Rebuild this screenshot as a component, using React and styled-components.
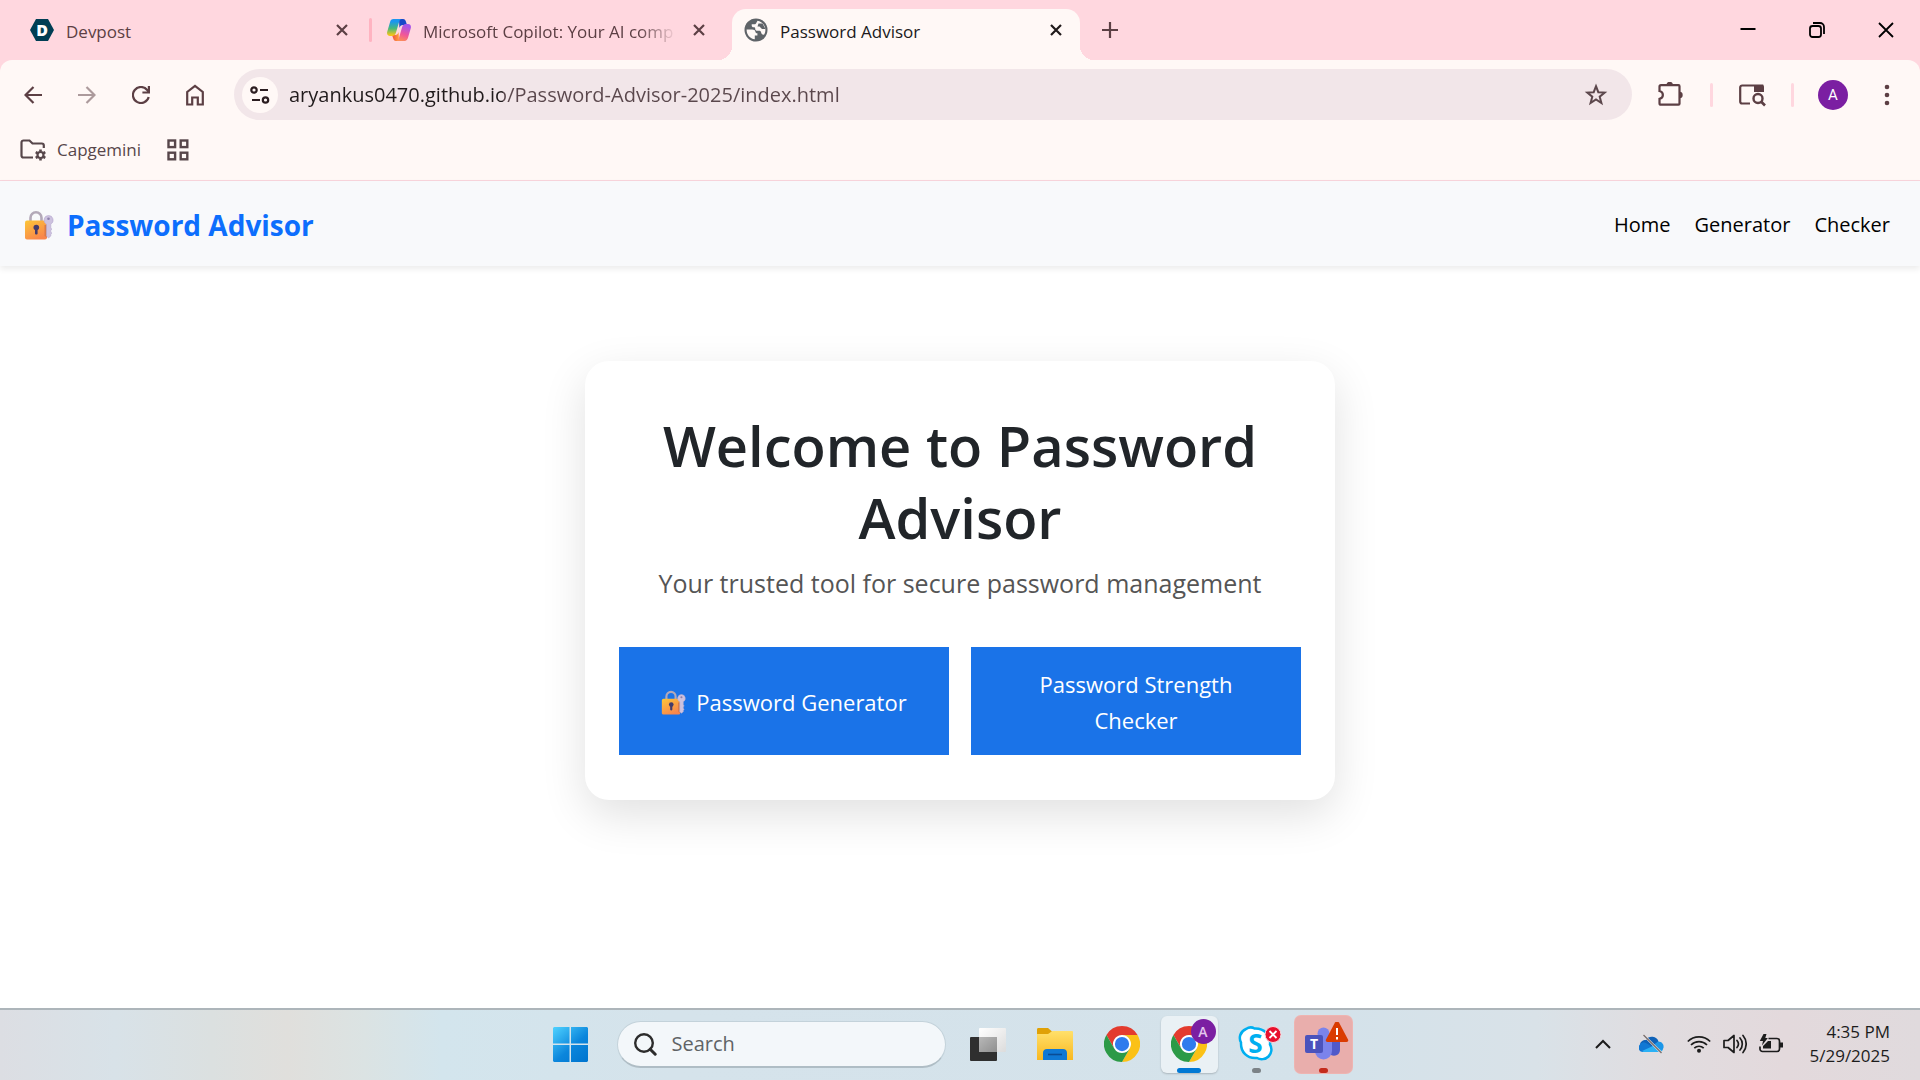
import styled, { createGlobalStyle, css } from "styled-components";

const COLORS = {
  strip: "#ffd7df",
  toolbar: "#fff8f6",
  pill: "#f2e6e9",
  icon: "#5c3f44",
  separator: "#ffb3c1",
  primary: "#0d6efd",
  button: "#1a73e8",
};

const tabs = [
  { title: "Devpost", icon: "devpost", divider: true },
  { title: "Microsoft Copilot: Your AI comp", icon: "copilot", faded: true },
  { title: "Password Advisor", icon: "globe", active: true },
];

const App = () => {
  return (
    <>
      <GlobalStyle />
      <Screen>
        <TabStrip />
        <Toolbar />
        <Bookmarks />
        <Page />
        <Taskbar />
      </Screen>
    </>
  );
};

/* ---------- browser ---------- */

const TabStrip = () => (
  <Strip>
    {tabs.map((tab) => (
      <TabSlot key={tab.title}>
        <Tab $active={tab.active}>
          <TabIcon name={tab.icon} />
          <TabTitle $faded={tab.faded}>{tab.title}</TabTitle>
          <CloseTab aria-label={`Close ${tab.title}`}>
            <svg width="12" height="12" viewBox="0 0 12 12">
              <path d="M1 1l10 10M11 1L1 11" stroke="currentColor" strokeWidth="2.2" />
            </svg>
          </CloseTab>
        </Tab>
        <TabGap>{tab.divider && <Divider $color={COLORS.separator} />}</TabGap>
      </TabSlot>
    ))}
    <NewTab aria-label="New tab">
      <svg width="16" height="16" viewBox="0 0 16 16">
        <path d="M8 0v16M0 8h16" stroke="currentColor" strokeWidth="2.2" />
      </svg>
    </NewTab>
    <WindowControls>
      <WindowButton aria-label="Minimize">
        <svg width="16" height="16" viewBox="0 0 16 16">
          <path d="M0.5 7h15" stroke="#000" strokeWidth="2" />
        </svg>
      </WindowButton>
      <WindowButton aria-label="Restore">
        <svg width="16" height="16" viewBox="0 0 16 16" fill="none" stroke="#000" strokeWidth="1.8">
          <rect x="1" y="4" width="11" height="11" rx="2.5" />
          <path d="M4 1h7a4 4 0 0 1 4 4v7" />
        </svg>
      </WindowButton>
      <WindowButton aria-label="Close window">
        <svg width="16" height="16" viewBox="0 0 16 16">
          <path d="M1 1l14 14M15 1L1 15" stroke="#000" strokeWidth="1.8" />
        </svg>
      </WindowButton>
    </WindowControls>
  </Strip>
);

const TabIcon = ({ name }) => {
  if (name === "devpost") {
    return (
      <Favicon viewBox="0 0 24 24">
        <path d="M6 1h12l6 11-6 11H6L0 12z" fill="#003e54" />
        <text x="12" y="18" textAnchor="middle" fontSize="16" fontWeight="800" fontFamily="Open Sans" fill="#fff">
          D
        </text>
      </Favicon>
    );
  }
  if (name === "copilot") {
    return (
      <Favicon viewBox="0 0 24 24">
        <defs>
          <linearGradient id="cpLeft" x1="0" y1="0" x2="0" y2="1">
            <stop offset="0.15" stopColor="#1a96f0" />
            <stop offset="0.55" stopColor="#46b87c" />
            <stop offset="0.95" stopColor="#f5c518" />
          </linearGradient>
          <linearGradient id="cpRight" x1="0.3" y1="0" x2="0" y2="1">
            <stop offset="0" stopColor="#a855e8" />
            <stop offset="0.5" stopColor="#f0569a" />
            <stop offset="1" stopColor="#ff9a4a" />
          </linearGradient>
          <linearGradient id="cpBottom" x1="0" y1="0" x2="1" y2="0">
            <stop offset="0" stopColor="#f04e3e" />
            <stop offset="1" stopColor="#ffa03c" />
          </linearGradient>
        </defs>
        <path d="M12 1h4c2 0 2.600 1.400 3.200 3.400L20 7h-4c-2 0-3 1-3.600 3z" fill="#1848c8" />
        <path d="M12 23H9c-2 0-2.500-1.400-3-3.200L5 17h3c2 0 3-1 3.600-3z" fill="url(#cpBottom)" />
        <path
          d="M6.500 1H15c-1.600 0-2.400 1.200-3 3.200L9 14.500C8.400 16.600 7.300 18 5 18H3c-2.400 0-3.500-2-2.700-4.500L3 4.200C3.600 2.200 4.500 1 6.500 1z"
          fill="url(#cpLeft)"
        />
        <path
          d="M17.500 23H9c1.600 0 2.400-1.200 3-3.200L15 9.500C15.600 7.400 16.700 6 19 6h2c2.400 0 3.500 2 2.700 4.500L21 19.800c-.6 2-1.500 3.200-3.500 3.200z"
          fill="url(#cpRight)"
        />
      </Favicon>
    );
  }
  return (
    <Favicon viewBox="0 0 24 24">
      <circle cx="12" cy="12" r="11.5" fill="#5f6368" />
      <path
        d="M2.600 11.500h5.600c1.800 0 3 .8 3.200 2.200.2 1.100.9 1.500 2 1.500v2.300h-2.600v3.700C6 20.800 2.600 16.800 2.600 11.500z"
        fill="#fff8f6"
      />
      <path
        d="M13.500 2.800c4.300.6 7.900 4.400 7.900 9.200 0 1.700-.5 3.300-1.200 4.600-1.600.3-2.700-.5-3-1.900-.2-1.300-.9-1.900-2.400-1.900h-1.400c-1.400 0-2.200-.8-2.200-2.100 0-1-.5-1.400-1.500-1.400-1.300 0-2-.6-2-1.800V6.200h2.600c1.300 0 1.900-.6 2.100-1.500z"
        fill="#fff8f6"
      />
      <path d="M14.500 5.500h4l3 5.500h-3.500l-2.500-2.500h-2z" fill="#5f6368" />
    </Favicon>
  );
};

const Toolbar = () => (
  <ToolbarRow>
    <ToolButton aria-label="Back">
      <svg width="18" height="18" viewBox="0 0 18 18" fill="none" stroke="currentColor" strokeWidth="2.2">
        <path d="M18 9H1.500M9.500 1L1.500 9l8 8" />
      </svg>
    </ToolButton>
    <ToolButton aria-label="Forward" $faded>
      <svg width="18" height="18" viewBox="0 0 18 18" fill="none" stroke="currentColor" strokeWidth="2.2">
        <path d="M0 9h16.500M8.500 1l8 8-8 8" />
      </svg>
    </ToolButton>
    <ToolButton aria-label="Reload">
      <svg width="18" height="18" viewBox="0 0 18 18" fill="none" stroke="currentColor" strokeWidth="2.2">
        <path d="M16.700 11A8 8 0 1 1 15.200 4L16.500 6" />
        <path d="M16.900 0v6.500h-6.500" />
      </svg>
    </ToolButton>
    <ToolButton aria-label="Home">
      <svg width="18" height="22" viewBox="0 0 18 22" fill="none" stroke="currentColor" strokeWidth="2.2">
        <path d="M1.200 20.500V8L9 1.800 16.800 8v12.500h-5v-7H6.200v7z" />
      </svg>
    </ToolButton>
    <AddressBar>
      <SiteInfo aria-label="View site information">
        <svg width="20" height="18" viewBox="0 0 20 18" fill="none" stroke="#2b1d20" strokeWidth="2.2">
          <circle cx="4" cy="4" r="2.7" />
          <path d="M10 4h8M2 14h8" />
          <circle cx="15.5" cy="14" r="2.7" />
        </svg>
      </SiteInfo>
      <AddressInput
        aria-label="Address"
        defaultValue="aryankus0470.github.io/Password-Advisor-2025/index.html"
        spellCheck={false}
      />
      <StarButton aria-label="Bookmark this page">
        <svg width="24" height="24" viewBox="0 0 24 24" fill="none" stroke="#5c474c" strokeWidth="2">
          <path d="M12 3.200l2.300 6 6.400.4-5 4.100 1.700 6.300-5.400-3.500L6.600 20l1.700-6.300-5-4.100 6.400-.4z" />
        </svg>
      </StarButton>
    </AddressBar>
    <ToolButton aria-label="Extensions">
      <svg width="26" height="26" viewBox="1 1 26 26">
        <path
          d="M4 4.200h17.500a1 1 0 0 1 1 1v17.500a1 1 0 0 1-1 1H4a1.500 1.500 0 0 1-1.500-1.500v-4.400C7 17 7 11 2.500 10V5.700A1.500 1.500 0 0 1 4 4.200z"
          fill="none"
          stroke="currentColor"
          strokeWidth="2.2"
        />
        <path d="M9.500 4a3.200 3.200 0 0 1 6.400 0zM22.500 10.800a3.200 3.200 0 0 1 0 6.400z" fill="currentColor" />
      </svg>
    </ToolButton>
    <Divider $color={COLORS.strip} $spaced />
    <ToolButton aria-label="Search in side panel">
      <svg width="28" height="24" viewBox="0 0 28 24" fill="none" stroke="currentColor" strokeWidth="2.2">
        <path d="M12 20.500H4.200a2 2 0 0 1-2-2V4.500a2 2 0 0 1 2-2h20V8" />
        <path d="M16 2h8.500a1.500 1.500 0 0 1 1.500 1.500V9H16z" fill="currentColor" stroke="none" />
        <circle cx="20" cy="15.5" r="4.5" strokeWidth="2.4" />
        <path d="M23 18.500l4 4" strokeWidth="2.6" />
      </svg>
    </ToolButton>
    <Divider $color={COLORS.strip} $spaced />
    <ToolButton aria-label="Profile">
      <Avatar>A</Avatar>
    </ToolButton>
    <ToolButton aria-label="Menu">
      <svg width="6" height="22" viewBox="0 0 6 22" fill="currentColor">
        <circle cx="3" cy="3" r="2.3" />
        <circle cx="3" cy="11" r="2.3" />
        <circle cx="3" cy="19" r="2.3" />
      </svg>
    </ToolButton>
  </ToolbarRow>
);

const Bookmarks = () => (
  <BookmarkRow>
    <Bookmark href="#capgemini">
      <svg width="27" height="22" viewBox="0 0 27 22" fill="none" stroke="#57464a" strokeWidth="2.2">
        <path d="M13 18.500H3.500a2 2 0 0 1-2-2V3.500a2 2 0 0 1 2-2h6l3 3h9.300a2 2 0 0 1 2 2V9" />
        <circle cx="20.5" cy="16" r="3" />
        <path
          d="M20.500 10.500v2M20.500 19.500v2M15.700 13.200l1.800 1M23.500 17.800l1.800 1M15.700 18.800l1.800-1M23.500 14.200l1.800-1"
          strokeWidth="2.6"
        />
      </svg>
      Capgemini
    </Bookmark>
    <Bookmark href="#apps" aria-label="Apps">
      <svg width="22" height="22" viewBox="0 0 22 22" fill="none" stroke="#57464a" strokeWidth="2.4">
        <rect x="1.5" y="1.5" width="6.6" height="6.6" />
        <rect x="13.7" y="1.5" width="6.6" height="6.6" />
        <rect x="1.5" y="13.7" width="6.6" height="6.6" />
        <rect x="13.7" y="13.7" width="6.6" height="6.6" />
      </svg>
    </Bookmark>
  </BookmarkRow>
);

/* ---------- web page ---------- */

const LockAndKey = ({ size }) => (
  <svg width={size} height={size} viewBox="0 0 30 30" aria-hidden="true">
    <defs>
      <linearGradient id="lockBody" x1="0" y1="0" x2="0.6" y2="1">
        <stop offset="0" stopColor="#fcc637" />
        <stop offset="1" stopColor="#f9854c" />
      </linearGradient>
    </defs>
    <path d="M6.500 12V7.700a5.500 5.500 0 0 1 11 0V12" fill="none" stroke="#b3a9b8" strokeWidth="2.6" />
    <rect x="1" y="10.5" width="22" height="19" rx="2" fill="url(#lockBody)" />
    <path d="M20.500 15v11l2.500 1.500V15z" fill="#d97a48" />
    <circle cx="12.300" cy="17.5" r="2.8" fill="#433b6b" />
    <rect x="11" y="18" width="2.6" height="6.500" rx="1" fill="#433b6b" />
    <path
      d="M24.500 5.500a4.600 4.600 0 0 1 2.300 8.600V18l1 1-1 1.500v1.500l1 1-1 1.500v1.500L24.500 28l-2-2V14.200a4.600 4.600 0 0 1 2-8.700z"
      fill="#cdc2df"
      stroke="#b5a8cc"
      strokeWidth="0.6"
    />
    <circle cx="24.500" cy="8.700" r="1.300" fill="#8d80ac" />
  </svg>
);

const Page = () => (
  <PageWrapper>
    <NavBar>
      <Brand href="#top">
        <LockAndKey size={30} />
        Password Advisor
      </Brand>
      <NavLinks>
        <NaviLink href="#home">Home</NaviLink>
        <NaviLink href="#generator">Generator</NaviLink>
        <NaviLink href="#checker">Checker</NaviLink>
      </NavLinks>
    </NavBar>
    <Main>
      <Card>
        <Title>Welcome to Password Advisor</Title>
        <Subtitle>Your trusted tool for secure password management</Subtitle>
        <Actions>
          <ActionButton>
            <LockAndKey size={25} />
            Password Generator
          </ActionButton>
          <ActionButton>Password Strength Checker</ActionButton>
        </Actions>
      </Card>
    </Main>
  </PageWrapper>
);

/* ---------- taskbar ---------- */

const ChromeLogo = () => (
  <svg width="36" height="36" viewBox="0 0 48 48">
    <circle cx="24" cy="24" r="12" fill="#fff" />
    <path d="M24 12h20.781a23.994 23.994 0 0 0-41.564.003L13.608 30l.009-.002A11.985 11.985 0 0 1 24 12z" fill="#e33b2e" />
    <path d="M34.391 30.003L24.001 48A23.994 23.994 0 0 0 44.780 12.003H23.999l-.003.009a11.985 11.985 0 0 1 10.395 17.991z" fill="#fbc116" />
    <path d="M13.609 30.003L3.218 12.006A23.994 23.994 0 0 0 24.003 48l10.390-17.997-.007-.007a11.985 11.985 0 0 1-20.778.007z" fill="#2c9a47" />
    <circle cx="24" cy="24" r="9.5" fill="#2f7bed" />
  </svg>
);

const Taskbar = () => (
  <TaskbarWrapper>
    <Pinned>
      <TaskButton aria-label="Start">
        <svg width="35" height="35" viewBox="0 0 35 35">
          <defs>
            <linearGradient id="win" gradientUnits="userSpaceOnUse" x1="0" y1="0" x2="30" y2="35">
              <stop offset="0" stopColor="#4fd2ff" />
              <stop offset="0.6" stopColor="#0b86dc" />
              <stop offset="1" stopColor="#0076d0" />
            </linearGradient>
          </defs>
          <path d="M1 0h15.500v16.500H0V1zM18 0h16l1 1v15.500H18zM0 18h16.500v17H1l-1-1zM18 18h17v16l-1 1H18z" fill="url(#win)" />
        </svg>
      </TaskButton>
      <SearchBox>
        <svg width="24" height="24" viewBox="0 0 24 24" fill="none" stroke="#2c2c2c">
          <circle cx="11" cy="11" r="8.8" strokeWidth="2.4" />
          <path d="M17.200 17.200l5 5" strokeWidth="3" strokeLinecap="round" />
        </svg>
        <SearchInput aria-label="Search" placeholder="Search" />
      </SearchBox>
      <TaskButton aria-label="Task view">
        <svg width="36" height="36" viewBox="0 0 36 36">
          <defs>
            <linearGradient id="tv" x1="0" y1="0" x2="1" y2="1">
              <stop offset="0" stopColor="#fff" />
              <stop offset="1" stopColor="#dcdcdc" />
            </linearGradient>
            <linearGradient id="tvOverlap" x1="0" y1="0" x2="1" y2="1">
              <stop offset="0" stopColor="#b8b8b8" />
              <stop offset="1" stopColor="#8f8f8f" />
            </linearGradient>
          </defs>
          <rect x="0" y="11" width="27" height="24" rx="1" fill="#2f2f2f" />
          <rect x="9" y="2" width="27" height="24" rx="1" fill="url(#tv)" />
          <rect x="9" y="11" width="18" height="15" fill="url(#tvOverlap)" />
        </svg>
      </TaskButton>
      <TaskButton aria-label="File Explorer">
        <svg width="36" height="36" viewBox="0 0 36 36">
          <defs>
            <linearGradient id="folder" x1="0" y1="0" x2="0" y2="1">
              <stop offset="0" stopColor="#ffe06b" />
              <stop offset="1" stopColor="#f9b820" />
            </linearGradient>
          </defs>
          <path d="M0 3.500C0 2.500.5 2 1.500 2H11l4 3.500L12 9H0z" fill="#e0a106" />
          <path d="M0 8h11l4.500-3H35a1 1 0 0 1 1 1v28H0z" fill="url(#folder)" />
          <path d="M6 34V27c0-2.500 1.500-4 4-4h16c2.500 0 4 1.500 4 4v7z" fill="#0f78d4" />
          <path d="M11 28.500h14" stroke="#0a4c94" strokeWidth="1.6" />
        </svg>
      </TaskButton>
      <TaskButton aria-label="Google Chrome">
        <ChromeLogo />
      </TaskButton>
      <TaskButton aria-label="Google Chrome, profile A" $state="active">
        <ChromeLogo />
        <ProfileBadge>A</ProfileBadge>
      </TaskButton>
      <TaskButton aria-label="Skype" $state="running">
        <svg width="52" height="36" viewBox="-6 0 52 36">
          <path
            d="M10 3C13 1 16 1 18.500 2.500 28 2 35 9 34 18.500c2.500 4 1.500 9-1.500 12-3 3-8 3.500-11.500 1.500C11 33 4.500 26 5 16.500 2.500 12 4 5.500 10 3z"
            fill="#fff"
            stroke="#00aff0"
            strokeWidth="2.5"
          />
          <text x="19.500" y="26.500" textAnchor="middle" fontSize="26" fontWeight="700" fontFamily="Open Sans" fill="#00aff0">
            S
          </text>
          <circle cx="37" cy="8.500" r="8" fill="#e8102d" stroke="#f6dfe3" />
          <path d="M33.500 5l7 7M40.500 5l-7 7" stroke="#fff" strokeWidth="1.8" />
        </svg>
      </TaskButton>
      <TaskButton aria-label="Microsoft Teams" $state="alert">
        <svg width="52" height="44" viewBox="-6 1 52 44">
          <path d="M28 17h9v12a6 6 0 0 1-9 5z" fill="#5059c9" />
          <circle cx="20.500" cy="12.500" r="6" fill="#7b83eb" />
          <path d="M12 17h17v13a8.500 8.500 0 0 1-17 0z" fill="#7b83eb" />
          <rect x="2" y="14" width="18" height="18" rx="2" fill="#4b53bc" />
          <text x="11" y="28" textAnchor="middle" fontSize="14" fontWeight="700" fontFamily="Open Sans" fill="#fff">
            T
          </text>
          <path d="M32 1.500a2.500 2.500 0 0 1 4 0l9 17c.7 1.500 0 2.500-1.500 2.500h-19c-1.500 0-2.200-1-1.500-2.500z" fill="#da3b01" />
          <path d="M34 7v7M34 16v2.500" stroke="#fff" strokeWidth="2" />
        </svg>
      </TaskButton>
    </Pinned>
    <Tray>
      <TrayButton aria-label="Show hidden icons">
        <svg width="16" height="10" viewBox="0 0 16 10">
          <path d="M1 9l7-7 7 7" fill="none" stroke="#1c1c1c" strokeWidth="2" />
        </svg>
      </TrayButton>
      <TrayButton aria-label="OneDrive">
        <svg width="25" height="20" viewBox="0 0 25 20">
          <path d="M7 6a7 7 0 0 1 12.500 1.500L14 13 1 11c0-3 2.500-5 6-5z" fill="#0f62b8" />
          <path d="M1 17a5.200 5.200 0 0 1 5-8.500L14 13l-8 5H5c-2 0-3-.4-4-1z" fill="#1178d4" />
          <path d="M19 7.500c4 0 6 3 5.500 6S22 18 20 18h-6l-1-6z" fill="#1b96e8" />
          <path d="M3 17l11-5 9.500 4.500c-1 1-2 1.500-4 1.500H6c-1 0-2 0-3-1z" fill="#2bb1f5" />
          <path d="M4.500 1l18 18" stroke="#efe6e6" strokeWidth="2.4" />
          <path d="M4.500 1l18 18" stroke="#77706f" strokeWidth="1.4" />
        </svg>
      </TrayButton>
      <StatusButton aria-label="Network, volume and battery">
        <svg width="24" height="18" viewBox="0 0 24 18" fill="none" stroke="#1c1c1c" strokeWidth="1.7">
          <path d="M0.800 6.500a15.800 15.800 0 0 1 22.400 0M4 10a11.300 11.300 0 0 1 16 0M7.300 13.200a6.600 6.600 0 0 1 9.400 0" />
          <circle cx="12" cy="15.8" r="2" fill="#1c1c1c" stroke="none" />
        </svg>
        <svg width="24" height="20" viewBox="0 0 24 20" fill="none" stroke="#1c1c1c" strokeWidth="1.7" strokeLinejoin="round">
          <path d="M1 6.500h4L11 1.500v17L5 13.500H1z" />
          <path d="M14 6.500a5.500 5.500 0 0 1 0 7M17 4a9 9 0 0 1 0 12M20 1.500a13 13 0 0 1 0 17" strokeLinecap="round" />
        </svg>
        <svg width="24" height="20" viewBox="0 0 24 20" fill="none" stroke="#1c1c1c" strokeWidth="1.7">
          <path d="M9.500 4.500H18a2.500 2.500 0 0 1 2.500 2.500v8a2.500 2.500 0 0 1-2.500 2.500H3.500A2.500 2.500 0 0 1 1 15v-2.500" />
          <path d="M21 8.500h3v5h-3zM4 14.500V12l5-5h3v7.500z" fill="#1c1c1c" stroke="none" />
          <path d="M4.500 0h3L6.300 4h2.500L3 11.500 4 7H.8z" fill="#1c1c1c" stroke="none" />
        </svg>
      </StatusButton>
      <Clock dateTime="2025-05-29T16:35">
        <span>4:35 PM</span>
        <span>5/29/2025</span>
      </Clock>
    </Tray>
  </TaskbarWrapper>
);

const GlobalStyle = createGlobalStyle`
  * {
    box-sizing: border-box;
  }
  body {
    margin: 0;
    background: #fff;
    font-family: "Open Sans", "Noto Sans", sans-serif;
  }
  button,
  input {
    font-family: inherit;
    border: none;
    background: none;
    padding: 0;
  }
  svg {
    flex-shrink: 0;
    display: block;
  }
`;

const Screen = styled.div`
  min-height: 100vh;
  display: flex;
  flex-direction: column;
  background: ${COLORS.strip};
`;

const Strip = styled.div`
  display: flex;
  align-items: flex-end;
  height: 60px;
  padding-left: 18px;
  background: ${COLORS.strip};
`;

const TabSlot = styled.div`
  display: flex;
  flex: 0 1 357px;
  min-width: 0;
  height: 51px;
`;

const Tab = styled.div`
  position: relative;
  display: flex;
  flex: 1;
  align-items: center;
  gap: 12px;
  min-width: 0;
  padding: 0 18px 9px 12px;
  color: #5c3f44;

  ${(props) =>
    props.$active &&
    css`
      color: #201a1b;
      background: ${COLORS.toolbar};
      border-radius: 14px 14px 0 0;

      /* curved feet of the selected tab */
      &::before,
      &::after {
        content: "";
        position: absolute;
        bottom: 0;
        width: 14px;
        height: 14px;
      }
      &::before {
        left: -14px;
        background: radial-gradient(circle at 0 0, transparent 14px, ${COLORS.toolbar} 14px);
      }
      &::after {
        right: -14px;
        background: radial-gradient(circle at 100% 0, transparent 14px, ${COLORS.toolbar} 14px);
      }
    `}
`;

const Favicon = styled.svg`
  width: 24px;
  height: 24px;
`;

const TabTitle = styled.span`
  flex: 1;
  min-width: 0;
  padding-top: 3px;
  overflow: hidden;
  white-space: nowrap;
  font-size: 17px;
  line-height: 24px;
  ${(props) =>
    props.$faded &&
    css`
      mask-image: linear-gradient(to right, #000 calc(100% - 42px), transparent calc(100% - 4px));
    `}
`;

const CloseTab = styled.button`
  display: flex;
  color: inherit;
`;

const TabGap = styled.div`
  display: flex;
  align-items: center;
  justify-content: center;
  width: 9px;
  padding-bottom: 9px;
`;

const Divider = styled.span`
  width: 3px;
  height: 24px;
  margin: ${(props) => (props.$spaced ? "0 12px" : "0")};
  border-radius: 2px;
  background: ${(props) => props.$color};
`;

const NewTab = styled.button`
  display: flex;
  align-items: center;
  justify-content: center;
  width: 42px;
  height: 60px;
  color: ${COLORS.icon};
`;

const WindowControls = styled.div`
  display: flex;
  margin-left: auto;
`;

const WindowButton = styled.button`
  display: flex;
  align-items: center;
  justify-content: center;
  width: 69px;
  height: 60px;
`;

const ToolbarRow = styled.div`
  display: flex;
  align-items: center;
  padding: 9px 6px 0;
  background: ${COLORS.toolbar};
  border-radius: 12px 12px 0 0;
`;

const ToolButton = styled.button`
  display: flex;
  align-items: center;
  justify-content: center;
  width: 54px;
  height: 51px;
  color: ${COLORS.icon};
  opacity: ${(props) => (props.$faded ? 0.5 : 1)};
`;

const AddressBar = styled.div`
  display: flex;
  flex: 1;
  align-items: center;
  height: 51px;
  margin: 0 12px;
  padding: 0 18px 0 8px;
  border-radius: 26px;
  background: ${COLORS.pill};
`;

const SiteInfo = styled.button`
  display: flex;
  align-items: center;
  justify-content: center;
  width: 36px;
  height: 36px;
  border-radius: 50%;
  background: ${COLORS.toolbar};
`;

const AddressInput = styled.input`
  flex: 1;
  min-width: 0;
  margin-left: 11px;
  font-size: 20px;
  line-height: 30px;
  color: #201a1b;
  outline: none;
  /* the host is darker than the path */
  background: linear-gradient(to right, #201a1b 214px, #5a474c 214px);
  background-clip: text;
  -webkit-text-fill-color: transparent;
`;

const StarButton = styled.button`
  display: flex;
  align-items: center;
  justify-content: center;
  width: 36px;
  height: 36px;
`;

const Avatar = styled.span`
  display: flex;
  align-items: center;
  justify-content: center;
  width: 30px;
  height: 30px;
  border-radius: 50%;
  background: #7b1fa2;
  color: #fff;
  font-family: Roboto, sans-serif;
  font-size: 15px;
`;

const BookmarkRow = styled.div`
  display: flex;
  align-items: center;
  gap: 26px;
  height: 61px;
  padding: 0 20px;
  background: ${COLORS.toolbar};
  border-bottom: 1px solid #f9d5dc;
`;

const Bookmark = styled.a`
  display: flex;
  align-items: center;
  gap: 10px;
  color: #57464a;
  font-size: 17px;
  line-height: 24px;
  text-decoration: none;
`;

const PageWrapper = styled.div`
  display: flex;
  flex: 1;
  flex-direction: column;
  background: #fff;
`;

const NavBar = styled.nav`
  display: flex;
  align-items: center;
  justify-content: space-between;
  height: 85px;
  padding: 2px 30px 0 24px;
  background: #f8f9fb;
  box-shadow: 0 3px 6px rgba(0, 0, 0, 0.08);
`;

const Brand = styled.a`
  display: flex;
  align-items: center;
  gap: 13px;
  color: ${COLORS.primary};
  font-size: 28px;
  font-weight: 700;
  line-height: 42px;
  text-decoration: none;
`;

const NavLinks = styled.div`
  display: flex;
  gap: 24px;
`;

const NaviLink = styled.a`
  color: #000;
  font-size: 20px;
  line-height: 30px;
  text-decoration: none;
`;

const Main = styled.main`
  display: flex;
  flex: 1;
  align-items: flex-start;
  justify-content: center;
  padding: 95px 24px;
`;

const Card = styled.section`
  width: 100%;
  max-width: 750px;
  padding: 48px 34px 45px;
  border-radius: 24px;
  background: #fff;
  box-shadow: 0 15px 45px rgba(0, 0, 0, 0.12);
  text-align: center;
`;

const Title = styled.h1`
  margin: 0 0 10px;
  color: #212529;
  font-size: 56px;
  font-weight: 600;
  line-height: 72px;
`;

const Subtitle = styled.p`
  margin: 0 0 44px;
  color: #555;
  font-size: 25px;
  line-height: 40px;
`;

const Actions = styled.div`
  display: grid;
  grid-template-columns: 1fr 1fr;
  gap: 22px;
`;

const ActionButton = styled.button`
  display: flex;
  align-items: center;
  justify-content: center;
  gap: 10px;
  min-height: 108px;
  padding: 19px 42px 17px;
  background: ${COLORS.button};
  color: #fff;
  font-size: 22px;
  line-height: 36px;
`;

const TaskbarWrapper = styled.footer`
  display: grid;
  grid-template-columns: 1fr auto 1fr;
  align-items: center;
  height: 72px;
  padding-bottom: 2px;
  border-top: 2px solid #adb5ba;
  background: linear-gradient(
    to right,
    #dcdee3 0%,
    #d8e2e8 6%,
    #dbe0e0 11%,
    #e0dfdc 15%,
    #dbe3e3 19%,
    #d3e5ed 23%,
    #d5e3eb 35%,
    #d4e2ea 70%,
    #d9e2e8 80%,
    #e1dcdf 87%,
    #e3d9dc 93%,
    #e0dadd 100%
  );
`;

const Pinned = styled.div`
  display: flex;
  grid-column: 2;
  align-items: center;
  gap: 10px;
  padding-right: 27px;
`;

const TaskButton = styled.button`
  position: relative;
  display: flex;
  align-items: center;
  justify-content: center;
  width: 57px;
  height: 57px;
  border-radius: 6px;

  ${(props) =>
    props.$state === "active" &&
    css`
      background: #eaf1f5;
      box-shadow: 0 1px 2px rgba(0, 0, 0, 0.2);
    `}
  ${(props) =>
    props.$state === "alert" &&
    css`
      background: #e9aeac;
      box-shadow: 0 0 0 1px #eeb4b1;
    `}
  ${(props) =>
    props.$state &&
    css`
      &::after {
        content: "";
        position: absolute;
        bottom: 0;
        width: ${props.$state === "active" ? "24px" : "9px"};
        height: 5px;
        border-radius: 3px;
        background: ${{ active: "#0078d4", running: "#7b8287", alert: "#c42b1c" }[props.$state]};
      }
    `}
`;

const ProfileBadge = styled.span`
  position: absolute;
  top: 3px;
  right: 2px;
  width: 25px;
  height: 25px;
  border-radius: 50%;
  background: #7b1fa2;
  color: #e3c6ee;
  font-size: 14px;
  font-weight: 600;
  line-height: 25px;
  text-align: center;
`;

const SearchBox = styled.label`
  display: flex;
  align-items: center;
  gap: 15px;
  width: 329px;
  height: 47px;
  margin: 0 4px 0 8px;
  padding: 0 15px;
  border: 1px solid #c3d2da;
  border-bottom: 2px solid #afbdc5;
  border-radius: 24px;
  background: #f3f7fa;
`;

const SearchInput = styled.input`
  flex: 1;
  min-width: 0;
  font-size: 20px;
  line-height: 30px;
  outline: none;

  &::placeholder {
    color: #5f6366;
    opacity: 1;
  }
`;

const Tray = styled.div`
  display: flex;
  align-items: center;
  justify-content: flex-end;
  padding-right: 30px;
`;

const TrayButton = styled.button`
  display: flex;
  align-items: center;
  justify-content: center;
  width: 48px;
  height: 48px;
`;

const StatusButton = styled.button`
  display: flex;
  align-items: center;
  gap: 12px;
  height: 48px;
  margin: 0 26px 0 12px;
`;

const Clock = styled.time`
  display: flex;
  flex-direction: column;
  align-items: flex-end;
  color: #1c1c1c;
  font-size: 17px;
  line-height: 24px;
`;

export default App;
